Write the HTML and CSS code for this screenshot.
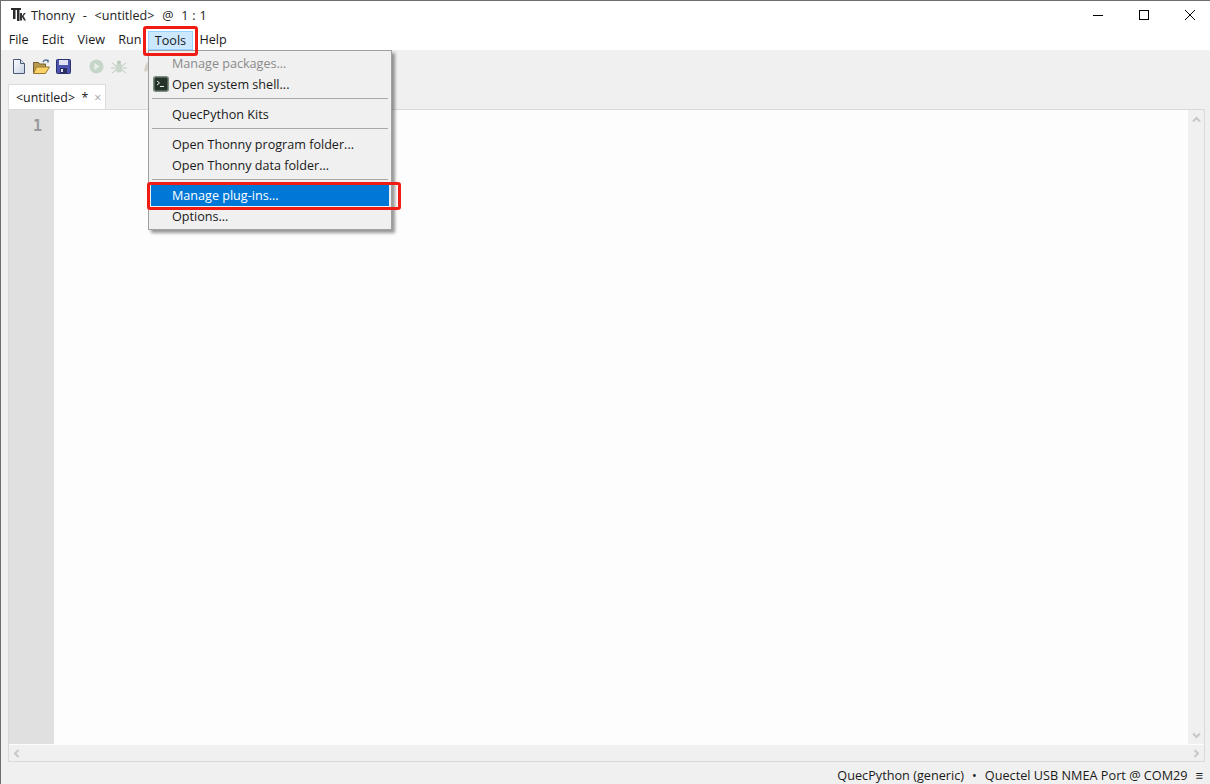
FILE: index.html
```html
<!DOCTYPE html>
<html lang="en">
<head>
<meta charset="utf-8">
<title>Thonny</title>
<link rel="stylesheet" href="styles.css">
</head>
<body>
<div class="window">
  <header class="titlebar">
    <svg class="app-icon" width="15" height="15" viewBox="0 0 15 15"><path d="M0 1h10v2H8.500v11H6V3H4.500v9H2V3H0z" fill="#2a2a2a"/><path d="M9 6h2v3l2-3h1.800l-2.300 3 2.500 4.500h-2l-2-3.500v3.500H9z" fill="#333"/></svg>
    <span class="title">Thonny &nbsp;-&nbsp; &lt;untitled&gt; &nbsp;@&nbsp; 1 : 1</span>
    <div class="win-controls">
      <svg width="12" height="12" viewBox="0 0 12 12"><path d="M1 6.500h10" stroke="#000" fill="none"/></svg>
      <svg width="12" height="12" viewBox="0 0 12 12"><rect x="1.500" y="1.500" width="9" height="9" stroke="#000" fill="none"/></svg>
      <svg width="12" height="12" viewBox="0 0 12 12"><path d="M1 1l10 10M11 1L1 11" stroke="#000" fill="none"/></svg>
    </div>
  </header>
  <nav class="menubar">
    <span class="menu-item">File</span>
    <span class="menu-item">Edit</span>
    <span class="menu-item">View</span>
    <span class="menu-item">Run</span>
    <span class="menu-item active">Tools</span>
    <span class="menu-item">Help</span>
  </nav>
  <div class="toolbar">
    <svg class="tool" width="12" height="15" viewBox="0 0 12 15"><defs><linearGradient id="pg" x1="0" y1="0" x2="1" y2="1"><stop offset="0" stop-color="#fff"/><stop offset="1" stop-color="#c4d0e4"/></linearGradient></defs><path d="M.5.500h7l4 4v10H.5z" fill="url(#pg)" stroke="#4a5a78"/><path d="M7.500.500v4h4" fill="#dbe3f0" stroke="#4a5a78"/></svg>
    <svg class="tool tool-open" width="17" height="15" viewBox="0 0 17 15"><path d="M.5 3.500h5l1 1.500h6v9H.5z" fill="#b99a4e" stroke="#6f5c30"/><path d="M.5 14.500l3-6.500h13l-4 6.500z" fill="#fbd268" stroke="#97782f"/><path d="M10 3c1-2 3-2.500 5-1.500v2" fill="none" stroke="#4a6a96" stroke-width="1.500"/></svg>
    <svg class="tool tool-save" width="15" height="15" viewBox="0 0 15 15"><rect x=".5" y=".5" width="14" height="14" rx="1" fill="#4b55b0" stroke="#2a3070"/><rect x="3" y="1" width="9" height="5" fill="#dfe3f5"/><rect x="4" y="9" width="7" height="5" fill="#2a2f60"/><rect x="5" y="10" width="2" height="3" fill="#dfe3f5"/></svg>
    <svg class="tool tool-run" width="15" height="15" viewBox="0 0 15 15"><circle cx="7.500" cy="7.500" r="7" fill="#c5d6c9"/><path d="M5.500 4l5 3.500-5 3.500z" fill="#e9f0ea"/></svg>
    <svg class="tool tool-bug" width="16" height="16" viewBox="0 0 16 16"><ellipse cx="8" cy="9" rx="3.500" ry="4.500" fill="#c9d6c9"/><circle cx="8" cy="3.500" r="2" fill="#bcc8bc"/><path d="M1 4l4 3M15 4l-4 3M0 9h4M16 9h-4M1 14l4-3M15 14l-4-3" stroke="#c2c9c2" fill="none"/></svg>
    <svg class="tool tool-step" width="6" height="14" viewBox="0 0 6 14"><ellipse cx="3" cy="7" rx="2" ry="5" fill="#d6d0c6" transform="rotate(20 3 7)"/></svg>
  </div>
  <div class="tabs">
    <div class="tab"><span class="tab-label">&lt;untitled&gt; &nbsp;*</span><span class="tab-close">×</span></div>
  </div>
  <main class="editor">
    <div class="editor-main">
      <div class="gutter">1</div>
      <div class="code"></div>
      <div class="vscroll">
        <svg width="9" height="7" viewBox="0 0 9 7"><path d="M1 5.500l3.500-3.500 3.500 3.500" stroke="#c8c8c8" stroke-width="2" fill="none"/></svg>
        <svg width="9" height="7" viewBox="0 0 9 7"><path d="M1 1.500l3.500 3.500 3.500-3.500" stroke="#c8c8c8" stroke-width="2" fill="none"/></svg>
      </div>
    </div>
    <div class="hscroll">
      <svg width="7" height="9" viewBox="0 0 7 9"><path d="M5.500 1l-3.500 3.500 3.500 3.500" stroke="#c8c8c8" stroke-width="2" fill="none"/></svg>
      <svg width="7" height="9" viewBox="0 0 7 9"><path d="M1.500 1l3.500 3.500-3.500 3.500" stroke="#c8c8c8" stroke-width="2" fill="none"/></svg>
    </div>
  </main>
  <footer class="statusbar">
    <span>QuecPython (generic)</span>
    <span class="status-sep">•</span>
    <span>Quectel USB NMEA Port @ COM29</span>
    <span class="status-menu">≡</span>
  </footer>

  <div class="dropdown">
    <div class="dd-item disabled">Manage packages...</div>
    <div class="dd-item">
      <svg class="dd-icon" width="16" height="16" viewBox="0 0 16 16"><rect x=".75" y=".75" width="14.500" height="14.500" rx="2" fill="#26332a" stroke="#7d9080" stroke-width="1.500"/><path d="M4 5l2.500 2L4 9M7 10.500h4" stroke="#e6efe6" fill="none"/></svg>
      Open system shell...
    </div>
    <div class="dd-sep"></div>
    <div class="dd-item">QuecPython Kits</div>
    <div class="dd-sep"></div>
    <div class="dd-item">Open Thonny program folder...</div>
    <div class="dd-item">Open Thonny data folder...</div>
    <div class="dd-sep"></div>
    <div class="dd-item selected">Manage plug-ins...</div>
    <div class="dd-item">Options...</div>
  </div>
  <div class="mark mark-tools"></div>
  <div class="mark mark-plugins"></div>
</div>
</body>
</html>
```
FILE: styles.css
```css
html, body { margin: 0; padding: 0; }
body { width: 1210px; height: 784px; overflow: hidden; background: #fff; }
.window {
  position: relative;
  box-sizing: border-box;
  width: 1210px;
  height: 784px;
  display: flex;
  flex-direction: column;
  border-top: 1px solid #6e6e6e;
  border-left: 1px solid #6e6e6e;
  font: 12.600px/18px "Open Sans", "Noto Sans", sans-serif;
  color: #1a1a1a;
  background: #f0f0f0;
}
.titlebar {
  height: 27px;
  display: flex;
  align-items: center;
  padding-left: 10px;
  background: #fff;
  flex: none;
}
.app-icon { margin-right: 5px; }
.title { color: #222; word-spacing: .6px; padding-top: 2px; }
.win-controls {
  margin-left: auto;
  display: flex;
  gap: 34px;
  padding-right: 14px;
}
.menubar {
  height: 22px;
  flex: none;
  display: flex;
  background: #fff;
  padding-left: 1px;
}
.menu-item { padding: 3px 6.650px 0; height: 19px; }
.menu-item.active {
  background: #cce8ff;
  border: 1px solid #99d1ff;
  box-sizing: border-box;
  height: 19px;
  margin-top: 3px;
  padding: 0 5.650px;
}
.toolbar {
  height: 34px;
  flex: none;
  display: flex;
  align-items: center;
  padding-left: 12px;
  padding-bottom: 1px;
  box-sizing: border-box;
}
.tool { flex: none; }
.tool-open { margin-left: 8px; }
.tool-save { margin-left: 6px; }
.tool-run { margin-left: 18px; }
.tool-bug { margin-left: 7px; }
.tool-step { margin-left: 17px; }
.tabs { height: 25px; flex: none; padding-left: 7px; display: flex; align-items: flex-end; }
.tab {
  box-sizing: border-box;
  height: 25px;
  width: 98px;
  background: #fff;
  border: 1px solid #dcdcdc;
  border-bottom: none;
  padding: 4px 0 0 7px;
  font-size: 12.400px;
  display: flex;
  gap: 6px;
}
.tab-label { white-space: nowrap; }
.tab-close { color: #a0a0a0; }
.editor {
  flex: none;
  height: 653px;
  margin: 0 5px 0 7px;
  box-sizing: border-box;
  border: 1px solid #d9d9d9;
  display: flex;
  flex-direction: column;
  background: #fdfdfd;
}
.editor-main { flex: 1; display: flex; min-height: 0; }
.gutter {
  width: 45px;
  background: #e0e0e0;
  color: #9a9a9a;
  font: bold 15px/32px "DejaVu Sans Mono", monospace;
  text-align: right;
  padding-right: 12px;
  box-sizing: border-box;
}
.code { flex: 1; background: #fdfdfd; }
.vscroll {
  width: 16px;
  background: #f0f0f0;
  display: flex;
  flex-direction: column;
  justify-content: space-between;
  align-items: center;
  padding: 6px 0 5px;
  box-sizing: border-box;
}
.hscroll {
  height: 16px;
  flex: none;
  margin-top: 1px;
  background: #f0f0f0;
  display: flex;
  justify-content: space-between;
  align-items: center;
  padding: 0 4px;
  box-sizing: border-box;
}
.statusbar {
  flex: 1;
  display: flex;
  justify-content: flex-end;
  align-items: center;
  padding: 3px 7px 0 0;
  color: #1a1a1a;
  font-size: 12.700px;
}
.status-sep { margin: 0 8px; }
.status-menu { margin-left: 8px; }
.dropdown {
  position: absolute;
  left: 147px;
  top: 49px;
  width: 244px;
  height: 180px;
  box-sizing: border-box;
  background: #f0f0f0;
  border: 1px solid #a0a0a0;
  box-shadow: 3px 3px 3px rgba(0,0,0,.4);
  padding: 2px;
}
.dd-item {
  position: relative;
  height: 21px;
  line-height: 21px;
  padding-left: 21px;
  white-space: nowrap;
}
.dd-item.disabled { color: #8a8a8a; }
.dd-item.selected { background: #0078d7; color: #fff; }
.dd-icon { position: absolute; left: 2px; top: 2px; }
.dd-sep { height: 1px; background: #a8a8a8; margin: 3px 1px 5px 1px; }
.mark { position: absolute; border: 3px solid #f01c14; border-radius: 3px; box-sizing: border-box; }
.mark-tools { left: 142px; top: 25px; width: 55px; height: 30px; }
.mark-plugins { left: 146px; top: 181px; width: 254px; height: 28px; }
```
